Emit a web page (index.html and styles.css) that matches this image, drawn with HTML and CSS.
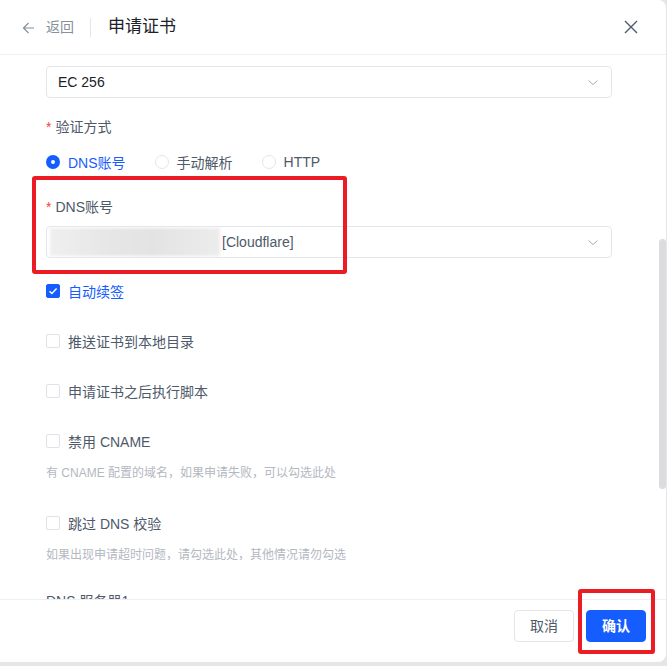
FILE: index.html
```html
<!DOCTYPE html>
<html lang="zh-CN">
<head>
<meta charset="utf-8">
<title>申请证书</title>
<link rel="stylesheet" href="styles.css">
</head>
<body>
<div class="modal">
  <header class="hd">
    <svg class="back-ic" width="13" height="12" viewBox="0 0 13 12"><path d="M12 6H1.5M6.5 1L1.5 6l5 5" fill="none" stroke="#86909c" stroke-width="1.2"/></svg>
    <span class="back-txt">返回</span>
    <span class="hd-div"></span>
    <span class="title">申请证书</span>
    <svg class="close-ic" width="14" height="14" viewBox="0 0 14 14"><path d="M1 1l12 12M13 1L1 13" fill="none" stroke="#4e5969" stroke-width="1.4"/></svg>
  </header>
  <div class="bd">
    <div class="form">
      <div class="select item-18">
        <span class="val">EC 256</span>
        <svg class="chev" width="12" height="12" viewBox="0 0 12 12"><path d="M1.5 4.5L6 8.5l4.5-4" fill="none" stroke="#a9aeb8" stroke-width="1"/></svg>
      </div>

      <div class="label lbl-8"><span class="req">*</span>验证方式</div>
      <div class="radios">
        <span class="radio on"><i class="dot"></i>DNS账号</span>
        <span class="radio"><i class="dot"></i>手动解析</span>
        <span class="radio"><i class="dot"></i>HTTP</span>
      </div>

      <div class="label lbl-8"><span class="req">*</span>DNS账号</div>
      <div class="select item-17">
        <span class="blur"></span><span class="val muted">[Cloudflare]</span>
        <svg class="chev" width="12" height="12" viewBox="0 0 12 12"><path d="M1.5 4.5L6 8.5l4.5-4" fill="none" stroke="#a9aeb8" stroke-width="1"/></svg>
      </div>

      <div class="check on item-18"><i class="box"><svg width="10" height="10" viewBox="0 0 10 10"><path d="M1.5 5.2l2.4 2.3L8.6 2.6" fill="none" stroke="#fff" stroke-width="1.4"/></svg></i>自动续签</div>
      <div class="check item-18"><i class="box"></i>推送证书到本地目录</div>
      <div class="check item-18"><i class="box"></i>申请证书之后执行脚本</div>
      <div class="check"><i class="box"></i>禁用 CNAME</div>
      <div class="help help-24">有 CNAME 配置的域名，如果申请失败，可以勾选此处</div>
      <div class="check"><i class="box"></i>跳过 DNS 校验</div>
      <div class="help help-25">如果出现申请超时问题，请勾选此处，其他情况请勿勾选</div>
      <div class="label">DNS 服务器1</div>
    </div>
    <span class="mark mark-dns"></span>
    <span class="scrollbar"></span>
  </div>
  <footer class="ft">
    <button class="btn">取消</button>
    <span class="btn-wrap">
      <button class="btn primary">确认</button>
      <span class="mark mark-ok"></span>
    </span>
  </footer>
</div>
</body>
</html>
```

FILE: styles.css
```css
html, body {
  margin: 0;
  padding: 0;
}
body {
  background: #e6e6e8;
  font-family: "Liberation Sans", "Noto Sans CJK SC", sans-serif;
  font-size: 14px;
  color: #1d2129;
}
.modal {
  width: 666px;
  height: 662px;
  background: #fff;
  border-radius: 0 8px 8px 0;
  display: flex;
  flex-direction: column;
  overflow: hidden;
}
.hd {
  height: 54px;
  flex-shrink: 0;
  border-bottom: 1px solid #eeeff2;
  display: flex;
  align-items: center;
  padding: 0 28px 0 22px;
}
.back-ic {
  margin-right: 11px;
  margin-top: 1px;
}
.back-txt {
  font-size: 14px;
  color: #86909c;
  line-height: 20px;
}
.hd-div {
  width: 1px;
  height: 19px;
  background: #e5e6eb;
  margin: 0 17px 0 16px;
}
.title {
  font-size: 17px;
  color: #1d2129;
  line-height: 24px;
}
.close-ic {
  margin-left: auto;
}
.bd {
  flex: 1;
  position: relative;
  overflow: hidden;
}
.form {
  padding: 11px 54px 0 46px;
}
.select {
  height: 32px;
  box-sizing: border-box;
  border: 1px solid #e5e6eb;
  border-radius: 4px;
  display: flex;
  align-items: center;
  padding: 0 12px 0 11px;
  font-size: 14px;
}
.val {
  color: #1d2129;
}
.val.muted {
  color: #4e5969;
}
.chev {
  margin-left: auto;
}
.blur {
  display: inline-block;
  width: 170px;
  height: 28px;
  margin-left: -8px;
  margin-right: 2px;
  background: linear-gradient(90deg, #efefef 0%, #e6e6e6 35%, #e3e3e3 60%, #ececec 100%);
  filter: blur(1.5px);
}
.item-18 {
  margin-bottom: 18px;
}
.item-17 {
  margin-bottom: 17px;
}
.label {
  font-size: 14px;
  line-height: 22px;
  color: #4e5969;
}
.lbl-8 {
  margin-bottom: 8px;
}
.req {
  color: #f53f3f;
  margin-right: 4px;
}
.radios {
  height: 32px;
  display: flex;
  align-items: center;
  gap: 29px;
  margin-bottom: 18px;
  color: #4e5969;
}
.radio {
  display: flex;
  align-items: center;
}
.radio .dot {
  width: 14px;
  height: 14px;
  box-sizing: border-box;
  border: 1px solid #e5e6eb;
  border-radius: 50%;
  margin-right: 8px;
  background: #fff;
}
.radio.on {
  color: #165dff;
}
.radio.on .dot {
  border: 5px solid #165dff;
}
.check {
  height: 32px;
  display: flex;
  align-items: center;
  color: #4e5969;
}
.check .box {
  width: 14px;
  height: 14px;
  box-sizing: border-box;
  border: 1px solid #e0e2e7;
  border-radius: 2px;
  margin-right: 8px;
  display: flex;
  align-items: center;
  justify-content: center;
}
.check.on {
  color: #165dff;
}
.check.on .box {
  background: #165dff;
  border-color: #165dff;
}
.help {
  margin-top: 6px;
  font-size: 12px;
  line-height: 20px;
  color: #b4b8bf;
}
.help-24 {
  margin-bottom: 24px;
}
.help-25 {
  margin-bottom: 25px;
}
.help + .label {
  margin-top: 3px;
}
.mark {
  position: absolute;
  box-sizing: border-box;
  border: 4px solid #ec1c24;
  border-radius: 3px;
  pointer-events: none;
}
.mark-dns {
  left: 32px;
  top: 121px;
  width: 315px;
  height: 98px;
}
.scrollbar {
  position: absolute;
  right: 0;
  top: 184px;
  width: 7px;
  height: 250px;
  background: #dcdcde;
  border-radius: 4px;
}
.ft {
  flex-shrink: 0;
  border-top: 1px solid #eeeff2;
  display: flex;
  justify-content: flex-end;
  align-items: flex-start;
  gap: 12px;
  padding: 10px 20px 20px;
}
.btn {
  height: 32px;
  padding: 0 15px;
  border: 1px solid #e5e6eb;
  border-radius: 4px;
  background: #fff;
  color: #4e5969;
  font-family: "Liberation Sans", "Noto Sans CJK SC", sans-serif;
  font-size: 14px;
  line-height: 30px;
}
.btn.primary {
  background: #165dff;
  border-color: #165dff;
  color: #fff;
  font-weight: 600;
}
.btn-wrap {
  position: relative;
  display: block;
  height: 32px;
}
.mark-ok {
  left: -8px;
  right: -9px;
  top: -21px;
  bottom: -12px;
}
```
